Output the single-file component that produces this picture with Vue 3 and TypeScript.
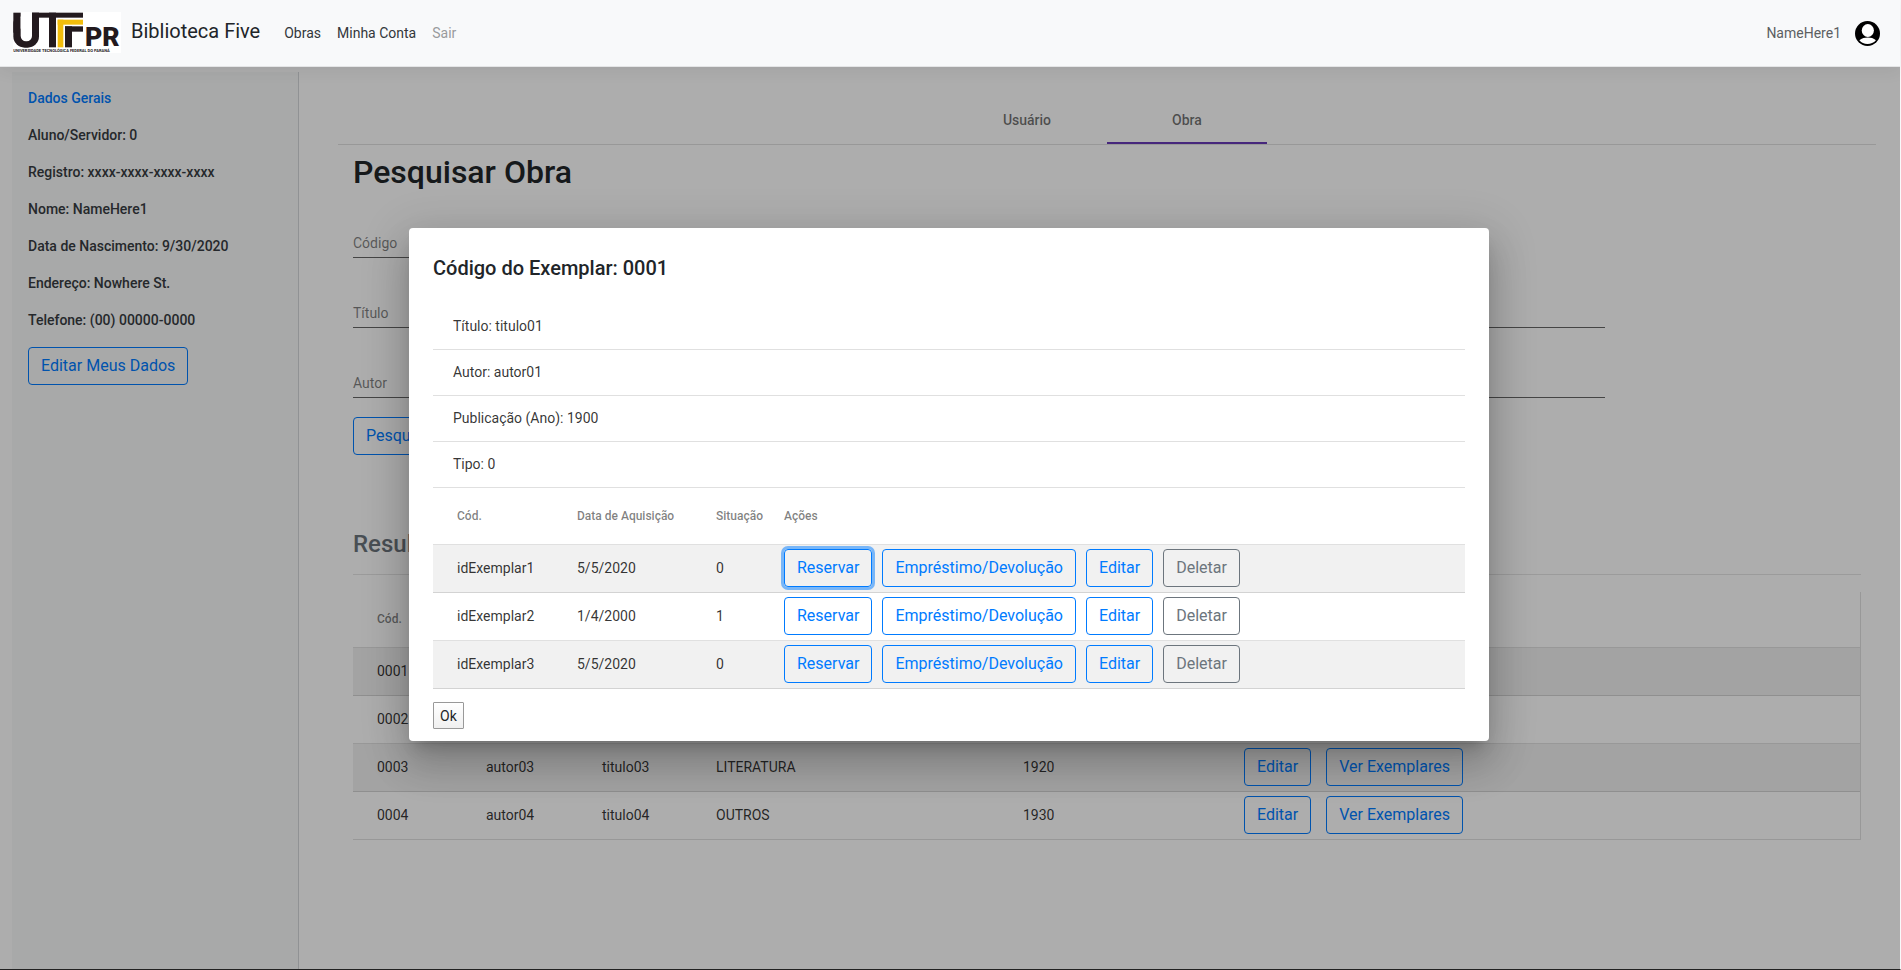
<script setup lang="ts">
interface Field {
  id: string
  label: string
  short?: boolean
}

interface Work {
  code: string
  author: string
  title: string
  genre: string
  year: string
}

interface Copy {
  id: string
  acquired: string
  status: number
}

const profile: string[] = [
  'Aluno/Servidor: 0',
  'Registro: xxxx-xxxx-xxxx-xxxx',
  'Nome: NameHere1',
  'Data de Nascimento: 9/30/2020',
  'Endereço: Nowhere St.',
  'Telefone: (00) 00000-0000',
]

const fields: Field[] = [
  { id: 'codigo', label: 'Código', short: true },
  { id: 'titulo', label: 'Título' },
  { id: 'autor', label: 'Autor' },
]

const works: Work[] = [
  { code: '0001', author: 'autor01', title: 'titulo01', genre: 'LITERATURA', year: '1900' },
  { code: '0002', author: 'autor02', title: 'titulo02', genre: 'OUTROS', year: '1910' },
  { code: '0003', author: 'autor03', title: 'titulo03', genre: 'LITERATURA', year: '1920' },
  { code: '0004', author: 'autor04', title: 'titulo04', genre: 'OUTROS', year: '1930' },
]

const details: string[] = ['Título: titulo01', 'Autor: autor01', 'Publicação (Ano): 1900', 'Tipo: 0']

const copies: Copy[] = [
  { id: 'idExemplar1', acquired: '5/5/2020', status: 0 },
  { id: 'idExemplar2', acquired: '1/4/2000', status: 1 },
  { id: 'idExemplar3', acquired: '5/5/2020', status: 0 },
]
</script>

<template>
  <div class="app">
    <header class="navbar">
      <a class="brand" href="#">
        <svg class="logo" viewBox="39 36 324 123" role="img" aria-label="UTFPR">
          <rect x="39" y="36" width="324" height="123" fill="#fff" />
          <g fill="#231a1e">
            <rect x="40" y="38" width="77" height="105" rx="34" />
            <rect x="40" y="38" width="77" height="60" />
          </g>
          <rect x="62" y="36" width="34" height="88" rx="16" fill="#fff" />
          <rect x="62" y="36" width="34" height="50" fill="#fff" />
          <g fill="#231a1e">
            <rect x="96" y="38" width="153" height="15" />
            <rect x="147" y="38" width="21" height="104" />
            <rect x="195" y="79" width="54" height="16" />
            <rect x="195" y="79" width="21" height="63" />
          </g>
          <g fill="#f2bd0c">
            <rect x="173" y="59" width="76" height="15" />
            <rect x="173" y="59" width="17" height="83" />
          </g>
          <text x="255" y="137" font-size="80" font-weight="900" fill="#231a1e">PR</text>
          <text x="40" y="157" font-size="12" font-weight="700" fill="#231a1e">UNIVERSIDADE TECNOLÓGICA FEDERAL DO PARANÁ</text>
        </svg>
        <span>Biblioteca Five</span>
      </a>
      <nav class="links">
        <a href="#">Obras</a>
        <a href="#">Minha Conta</a>
        <a href="#" class="muted">Sair</a>
      </nav>
      <div class="account">
        <span>NameHere1</span>
        <svg class="avatar" viewBox="0 0 74 74" aria-hidden="true">
          <circle cx="37" cy="37" r="37" fill="#000" />
          <ellipse cx="38" cy="28" rx="18" ry="19" fill="#fff" />
          <path d="M13 57C20 51 29 49 38 49s17 2 24 8c-7 8-15 11-25 11s-18-3-24-11z" fill="#fff" />
        </svg>
      </div>
    </header>

    <div class="page">
      <aside class="sidebar">
        <a class="side-title" href="#">Dados Gerais</a>
        <p v-for="line in profile" :key="line">{{ line }}</p>
        <button type="button" class="btn">Editar Meus Dados</button>
      </aside>

      <main class="main">
        <div class="tabs" role="tablist">
          <button type="button" role="tab" aria-selected="false" class="tab">Usuário</button>
          <button type="button" role="tab" aria-selected="true" class="tab active">Obra</button>
        </div>

        <section class="content">
          <h1>Pesquisar Obra</h1>
          <form class="search" @submit.prevent>
            <div v-for="f in fields" :key="f.id" class="field" :class="{ short: f.short }">
              <label :for="f.id">{{ f.label }}</label>
              <input :id="f.id" type="text" />
            </div>
            <button type="submit" class="btn submit">Pesquisar</button>
          </form>

          <h2>Resultados</h2>
          <table class="grid works">
            <colgroup>
              <col class="w-code" /><col class="w-author" /><col class="w-title" />
              <col class="w-genre" /><col class="w-year" /><col />
            </colgroup>
            <thead>
              <tr>
                <th>Cód.</th><th>Autor</th><th>Título</th><th>Gênero</th><th>Ano</th><th>Ações</th>
              </tr>
            </thead>
            <tbody>
              <tr v-for="w in works" :key="w.code">
                <td>{{ w.code }}</td>
                <td>{{ w.author }}</td>
                <td>{{ w.title }}</td>
                <td>{{ w.genre }}</td>
                <td>{{ w.year }}</td>
                <td>
                  <div class="actions wide">
                    <button type="button" class="btn">Editar</button>
                    <button type="button" class="btn">Ver Exemplares</button>
                  </div>
                </td>
              </tr>
            </tbody>
          </table>
        </section>
      </main>
    </div>

    <div class="backdrop">
      <div class="dialog" role="dialog" aria-modal="true" aria-labelledby="dialog-title">
        <h2 id="dialog-title" class="dialog-title">Código do Exemplar: 0001</h2>
        <ul class="details">
          <li v-for="d in details" :key="d">{{ d }}</li>
        </ul>
        <table class="grid copies">
          <colgroup>
            <col class="c-code" /><col class="c-date" /><col class="c-status" /><col />
          </colgroup>
          <thead>
            <tr>
              <th>Cód.</th><th>Data de Aquisição</th><th>Situação</th><th>Ações</th>
            </tr>
          </thead>
          <tbody>
            <tr v-for="(c, i) in copies" :key="c.id">
              <td>{{ c.id }}</td>
              <td>{{ c.acquired }}</td>
              <td>{{ c.status }}</td>
              <td>
                <div class="actions">
                  <button type="button" class="btn" :class="{ focused: i === 0 }">Reservar</button>
                  <button type="button" class="btn">Empréstimo/Devolução</button>
                  <button type="button" class="btn">Editar</button>
                  <button type="button" class="btn secondary">Deletar</button>
                </div>
              </td>
            </tr>
          </tbody>
        </table>
        <button type="button" class="ok">Ok</button>
      </div>
    </div>
  </div>
</template>

<style>
body {
  margin: 0;
}
</style>

<style scoped>
* {
  box-sizing: border-box;
}

.app {
  position: relative;
  display: flex;
  flex-direction: column;
  min-height: 100vh;
  background: #fff;
  border-right: 1px solid #f8f9fa;
  border-bottom: 1px solid #222;
  color: #212529;
  font-family: Roboto, "Liberation Sans", sans-serif;
  font-size: 14px;
  line-height: 21px;
}

button,
input {
  font-family: inherit;
}

a {
  color: inherit;
  text-decoration: none;
}

.navbar {
  position: relative;
  z-index: 3;
  display: flex;
  align-items: center;
  height: 67px;
  padding: 0 20px 0 13px;
  background: #f8f9fa;
  border-bottom: 1px solid #e4e5e6;
  box-shadow: 0 4px 16px rgba(0, 0, 0, 0.06);
}

.brand {
  display: flex;
  align-items: center;
  gap: 10px;
  font-size: 20px;
  line-height: 30px;
  padding-bottom: 4px;
}

.logo {
  width: 108px;
  height: 41px;
  margin-top: 3px;
}

.links {
  display: flex;
  gap: 16px;
  margin-left: 24px;
}

.links a {
  color: #33373a;
}

.links .muted {
  color: #999b9d;
}

.account {
  display: flex;
  align-items: center;
  gap: 14px;
  margin-left: auto;
  color: #5c5f62;
}

.avatar {
  width: 25px;
  height: 25px;
}

.page {
  display: flex;
  flex: 1;
  padding: 5px 0 0 12px;
}

.sidebar {
  width: 287px;
  padding: 16px;
  background: #f8f9fa;
  border-right: 1px solid #d5d8db;
  color: #373c41;
  font-weight: 500;
}

.side-title {
  display: block;
  color: #007bff;
}

.sidebar p {
  margin: 16px 0;
}

.btn {
  height: 38px;
  padding: 0 12px;
  background: transparent;
  border: 1px solid #007bff;
  border-radius: 4px;
  color: #007bff;
  font-size: 16px;
  line-height: 24px;
  white-space: nowrap;
}

.btn.secondary {
  border-color: #6c757d;
  color: #6c757d;
}

.btn.focused {
  box-shadow: 0 0 0 3px rgba(0, 123, 255, 0.5);
}

.main {
  flex: 1;
  min-width: 0;
  padding: 24px 24px 24px 39px;
}

.tabs {
  display: flex;
  justify-content: center;
  border-bottom: 1px solid rgba(0, 0, 0, 0.12);
}

.tab {
  width: 160px;
  height: 48px;
  padding: 2px 0 0;
  background: none;
  border: 0;
  border-bottom: 2px solid transparent;
  color: rgba(0, 0, 0, 0.56);
  font-size: 14px;
  font-weight: 500;
}

.tab.active {
  border-bottom-color: #673ab7;
}

.content {
  padding: 8px 15px 0;
}

h1 {
  margin: 0;
  font-size: 32px;
  line-height: 38px;
  font-weight: 500;
}

.search {
  display: flex;
  flex-direction: column;
  align-items: flex-start;
  gap: 45px;
  margin-top: 42px;
}

.field {
  display: grid;
  width: 83%;
  height: 25px;
  border-bottom: 1px solid rgba(0, 0, 0, 0.6);
}

.field.short {
  width: 40%;
}

.field label,
.field input {
  grid-area: 1 / 1;
}

.field label {
  color: rgba(0, 0, 0, 0.5);
}

.field input {
  width: 100%;
  padding: 0;
  background: transparent;
  border: 0;
  font-size: 14px;
}

.submit {
  margin-top: -26px;
}

h2 {
  margin: 0;
}

.content h2 {
  margin: 75px 0 17px;
  padding-bottom: 15px;
  border-bottom: 1px solid rgba(0, 0, 0, 0.1);
  color: #6c757d;
  font-size: 24px;
  line-height: 29px;
  font-weight: 500;
}

.grid {
  width: 100%;
  table-layout: fixed;
  border-spacing: 0;
}

.grid th,
.grid td {
  padding: 0;
  border-bottom: 1px solid rgba(0, 0, 0, 0.12);
  text-align: left;
}

.grid th {
  height: 56px;
  color: rgba(0, 0, 0, 0.5);
  font-size: 12px;
  font-weight: 500;
}

.grid td {
  height: 48px;
  color: rgba(0, 0, 0, 0.8);
}

.grid th:first-child,
.grid td:first-child {
  padding-left: 24px;
}

.grid tbody tr:nth-child(odd) {
  background: rgba(0, 0, 0, 0.055);
}

.works {
  border-right: 1px solid rgba(0, 0, 0, 0.12);
}

.w-code {
  width: 133px;
}

.w-author {
  width: 116px;
}

.w-title {
  width: 114px;
}

.w-genre {
  width: 307px;
}

.w-year {
  width: 221px;
}

.actions {
  display: flex;
  gap: 10px;
  padding-bottom: 1px;
}

.actions.wide {
  gap: 15px;
}

.backdrop {
  position: absolute;
  inset: 0;
  z-index: 2;
  display: flex;
  align-items: center;
  justify-content: center;
  padding-right: 2px;
  background: rgba(0, 0, 0, 0.32);
}

.dialog {
  width: 90%;
  max-width: 1080px;
  padding: 24px 24px 12px;
  background: #fff;
  border-radius: 4px;
  box-shadow:
    0 11px 15px -7px rgba(0, 0, 0, 0.2),
    0 24px 38px 3px rgba(0, 0, 0, 0.14),
    0 9px 46px 8px rgba(0, 0, 0, 0.12);
}

.dialog-title {
  margin-bottom: 20px;
  font-size: 20px;
  line-height: 32px;
  font-weight: 500;
}

.details {
  margin: 0;
  padding: 0;
  list-style: none;
}

.details li {
  padding: 12px 20px;
  border-bottom: 1px solid rgba(0, 0, 0, 0.12);
  color: rgba(0, 0, 0, 0.8);
}

.copies th {
  height: 57px;
}

.c-code {
  width: 144px;
}

.c-date {
  width: 139px;
}

.c-status {
  width: 68px;
}

.ok {
  display: block;
  height: 27px;
  margin-top: 13px;
  padding: 0 6px;
  background: linear-gradient(#fff, #f0f0f0);
  border: 1px solid #999;
  border-radius: 1px;
  color: #212529;
  font-size: 14px;
}
</style>
